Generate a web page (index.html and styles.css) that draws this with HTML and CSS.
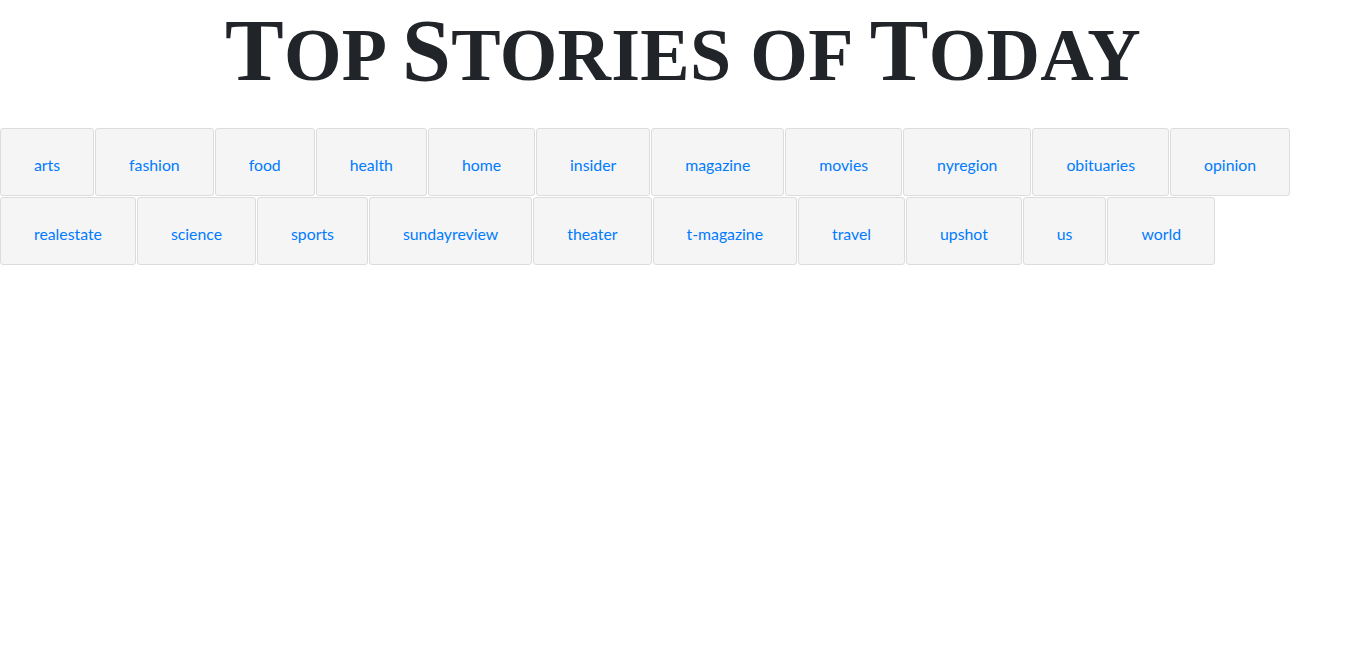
FILE: index.html
```html
<!DOCTYPE html>
<html lang="en">
<head>
<meta charset="utf-8">
<title>Top Stories of Today</title>
<link rel="stylesheet" href="styles.css">
</head>
<body>
<h1 class="title"><span class="initial">T</span>op <span class="initial">S</span>tories of <span class="initial">T</span>oday</h1>
<div class="sections">
  <button class="section-btn">arts</button>
  <button class="section-btn">fashion</button>
  <button class="section-btn">food</button>
  <button class="section-btn">health</button>
  <button class="section-btn">home</button>
  <button class="section-btn">insider</button>
  <button class="section-btn">magazine</button>
  <button class="section-btn">movies</button>
  <button class="section-btn">nyregion</button>
  <button class="section-btn">obituaries</button>
  <button class="section-btn">opinion</button>
  <button class="section-btn">realestate</button>
  <button class="section-btn">science</button>
  <button class="section-btn">sports</button>
  <button class="section-btn">sundayreview</button>
  <button class="section-btn">theater</button>
  <button class="section-btn">t-magazine</button>
  <button class="section-btn">travel</button>
  <button class="section-btn">upshot</button>
  <button class="section-btn">us</button>
  <button class="section-btn">world</button>
</div>
</body>
</html>
```
FILE: styles.css
```css
html, body {
  margin: 0;
  padding: 0;
  background: #fff;
}
body {
  font-family: "Lato", "Noto Sans", sans-serif;
  color: #212529;
}
.title {
  margin: 0;
  padding-top: 1px;
  height: 128px;
  box-sizing: border-box;
  text-align: center;
  font-family: "Liberation Serif", "DejaVu Serif", serif;
  text-transform: uppercase;
  font-weight: bold;
  font-size: 74px;
  line-height: 100px;
  color: #212529;
  letter-spacing: 0.3px;
}
.initial {
  font-size: 88px;
}
.sections {
  display: flex;
  flex-wrap: wrap;
  gap: 1px;
}
.section-btn {
  font-family: "Lato", "Noto Sans", sans-serif;
  font-size: 15.8px;
  line-height: 24px;
  color: #007bff;
  background: #f5f5f5;
  border: 1px solid #dcdcdc;
  border-radius: 3px;
  padding: 24px 33px 18px 33px;
  height: 68px;
  cursor: pointer;
}
```
